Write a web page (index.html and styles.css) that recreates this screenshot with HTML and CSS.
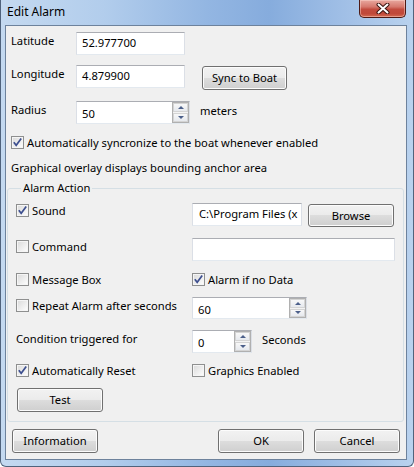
FILE: index.html
```html
<!DOCTYPE html>
<html>
<head>
<meta charset="utf-8">
<link rel="stylesheet" href="styles.css">
</head>
<body>
<div class="window">
  <div class="titlebar">
    <span class="title">Edit Alarm</span>
    <div class="close">
      <svg width="14" height="11" viewBox="0 0 14 11"><path d="M2.5 1.5 L11.5 9.5 M11.5 1.5 L2.5 9.5" stroke="#3a1410" stroke-width="4" stroke-linecap="round"/><path d="M2.5 1.5 L11.5 9.5 M11.5 1.5 L2.5 9.5" stroke="#ffffff" stroke-width="2" stroke-linecap="round"/></svg>
    </div>
  </div>
  <div class="client">
    <div class="row r-lat">
      <span class="lbl">Latitude</span>
      <div class="tb w109">52.977700</div>
    </div>
    <div class="row r-lon">
      <span class="lbl">Longitude</span>
      <div class="tb w109">4.879900</div>
      <div class="btn sync">Sync to Boat</div>
    </div>
    <div class="row r-rad">
      <span class="lbl">Radius</span>
      <div class="tb spin w114"><span class="val">50</span>
        <div class="spinbtns"><div class="sb up"></div><div class="sb down"></div></div>
      </div>
      <span class="unit meters">meters</span>
    </div>
    <div class="row r-auto">
      <span class="chk"><span class="cb on"><svg width="11" height="11" viewBox="0 0 11 11"><path d="M1.8 5.2 L4.2 8.3 L9.2 1.6" fill="none" stroke="#3d4f8f" stroke-width="1.7"/></svg></span>Automatically syncronize to the boat whenever enabled</span>
    </div>
    <div class="row r-note">Graphical overlay displays bounding anchor area</div>

    <div class="group">
      <div class="legend">Alarm Action</div>
      <div class="grow g-sound">
        <div class="lcell"><span class="chk"><span class="cb on"><svg width="11" height="11" viewBox="0 0 11 11"><path d="M1.8 5.2 L4.2 8.3 L9.2 1.6" fill="none" stroke="#3d4f8f" stroke-width="1.7"/></svg></span>Sound</span></div>
        <div class="tb w110 path"><span class="clip">C:\Program Files (x</span></div>
        <div class="btn browse">Browse</div>
      </div>
      <div class="grow g-cmd">
        <div class="lcell"><span class="chk"><span class="cb"></span>Command</span></div>
        <div class="tb w203"></div>
      </div>
      <div class="grow g-msg">
        <div class="lcell"><span class="chk"><span class="cb"></span>Message Box</span></div>
        <span class="chk"><span class="cb on"><svg width="11" height="11" viewBox="0 0 11 11"><path d="M1.8 5.2 L4.2 8.3 L9.2 1.6" fill="none" stroke="#3d4f8f" stroke-width="1.7"/></svg></span>Alarm if no Data</span>
      </div>
      <div class="grow g-rep">
        <div class="lcell"><span class="chk"><span class="cb"></span>Repeat Alarm after seconds</span></div>
        <div class="tb spin w115 h22"><span class="val">60</span>
          <div class="spinbtns"><div class="sb up"></div><div class="sb down"></div></div>
        </div>
      </div>
      <div class="grow g-cond">
        <div class="lcell"><span class="txt">Condition triggered for</span></div>
        <div class="tb spin w60"><span class="val">0</span>
          <div class="spinbtns"><div class="sb up"></div><div class="sb down"></div></div>
        </div>
        <span class="unit seconds">Seconds</span>
      </div>
      <div class="grow g-reset">
        <div class="lcell"><span class="chk"><span class="cb on"><svg width="11" height="11" viewBox="0 0 11 11"><path d="M1.8 5.2 L4.2 8.3 L9.2 1.6" fill="none" stroke="#3d4f8f" stroke-width="1.7"/></svg></span>Automatically Reset</span></div>
        <span class="chk"><span class="cb"></span>Graphics Enabled</span>
      </div>
      <div class="grow g-test">
        <div class="btn test">Test</div>
      </div>
    </div>

    <div class="bottom">
      <div class="btn">Information</div>
      <div class="spacer"></div>
      <div class="btn">OK</div>
      <div class="btn">Cancel</div>
    </div>
  </div>
</div>
</body>
</html>
```
FILE: styles.css
```css
* { box-sizing: border-box; }
html, body { margin: 0; padding: 0; }
body {
  width: 414px;
  height: 467px;
  overflow: hidden;
  font-family: "Noto Sans", "Open Sans", sans-serif;
  font-size: 11.2px;
  color: #000;
  background: #fff;
}
.window {
  width: 414px;
  height: 467px;
  background: linear-gradient(90deg, #c4d9f0 0%, #b2cdec 25%, #93b6e2 50%, #86acdd 65%, #a3c1e7 85%, #b9d2ee 100%);
  border-left: 1px solid #50637c;
  border-right: 1px solid #50637c;
  border-bottom: 1px solid #50637c;
  border-radius: 0 0 6px 6px;
  display: flex;
  flex-direction: column;
}
.titlebar {
  height: 25px;
  display: flex;
  align-items: flex-start;
  flex: none;
}
.title {
  margin: 4px 0 0 6px;
  line-height: 16px;
  font-size: 12px;
  color: #000;
}
.close {
  margin-left: auto;
  margin-right: 7px;
  width: 47px;
  height: 18px;
  border: 1px solid #4e1a15;
  border-top: none;
  border-radius: 0 0 5px 5px;
  background: linear-gradient(180deg, #e8a89f 0%, #d6786d 40%, #c24b3e 55%, #c0493a 80%, #d36a52 100%);
  box-shadow: inset 0 0 0 1px rgba(255,220,210,0.45);
  display: flex;
  align-items: center;
  justify-content: center;
}
.client {
  margin-left: 4px;
  width: 402px;
  height: 435px;
  border: 1px solid #6d829c;
  background: #f0f0f0;
  display: flex;
  flex-direction: column;
  flex: none;
}
.row {
  display: flex;
  align-items: flex-start;
  padding-left: 5px;
  flex: none;
}
.lbl {
  width: 65px;
  line-height: 16px;
  padding-top: 1px;
}
.r-lat { margin-top: 6px; height: 23px; }
.r-lon { margin-top: 10px; height: 25px; }
.r-rad { margin-top: 11px; height: 23px; }
.r-auto { margin-top: 11px; height: 15px; align-items: center; }
.r-note { margin-top: 10px; height: 16px; line-height: 16px; }

.tb {
  height: 23px;
  background: #fff;
  border: 1px solid #dbdfe6;
  border-top-color: #abadb3;
  border-bottom-color: #e3e9ef;
  padding-left: 5px;
  line-height: 20px;
  white-space: nowrap;
  overflow: hidden;
}
.w109 { width: 109px; }
.w110 { width: 110px; }
.w114 { width: 114px; }
.w115 { width: 115px; }
.w203 { width: 203px; }
.w60 { width: 60px; }
.h22 { height: 22px; }
.path { padding-left: 6px; padding-right: 1px; }
.clip { display: block; overflow: hidden; white-space: nowrap; }
.spin {
  display: flex;
  align-items: stretch;
  padding-right: 0;
}
.spin .val { flex: 1; line-height: 21px; padding-top: 1px; }
.spinbtns {
  width: 17px;
  border: 1px solid #b0b0b0;
  display: flex;
  flex-direction: column;
  justify-content: space-between;
  padding: 0;
  background: #f3f3f3;
}
.sb {
  flex: 1;
  border: 1px solid #d4d4d4;
  background: linear-gradient(180deg, #f8f8f8, #e6e9ee);
  display: flex;
  align-items: center;
  justify-content: center;
}
.sb + .sb { margin-top: 1px; }
.sb::after {
  content: "";
  width: 0;
  height: 0;
  border-left: 3px solid transparent;
  border-right: 3px solid transparent;
}
.up::after { border-bottom: 3px solid #4b5f8a; }
.down::after { border-top: 3px solid #4b5f8a; }

.unit { line-height: 16px; padding-top: 2px; }
.meters { margin-left: 10px; }
.seconds { margin-left: 10px; }

.btn {
  height: 24px;
  border: 1px solid #707070;
  border-radius: 3px;
  background: linear-gradient(180deg, #f2f2f2 0%, #ebebeb 50%, #dddddd 50%, #cfcfcf 100%);
  box-shadow: inset 0 0 0 1px #fcfcfc;
  display: flex;
  align-items: center;
  justify-content: center;
  line-height: 16px;
  width: 86px;
  flex: none;
}
.sync { margin-left: 17px; margin-top: 1px; width: 85px; }
.browse { margin-left: 6px; margin-top: 1px; height: 23px; }

.chk {
  display: inline-flex;
  align-items: center;
  height: 15px;
  line-height: 15px;
  white-space: nowrap;
}
.cb {
  width: 13px;
  height: 13px;
  border: 1px solid #8e8f8f;
  background: linear-gradient(135deg, #d9d9d9 0%, #f0f0f0 60%, #ffffff 100%);
  box-shadow: inset 0 0 0 1px #f5f5f5;
  margin-right: 3px;
  display: flex;
  align-items: center;
  justify-content: center;
  flex: none;
}
.cb svg { display: block; }

.group {
  margin-top: 12px;
  margin-left: 1px;
  width: 397px;
  border: 1px solid #d5dfe5;
  border-radius: 3px;
  padding: 0 0 9px 8px;
  flex: none;
}
.legend {
  margin: -9px 0 0 5px;
  padding: 0 2px;
  background: #f0f0f0;
  width: max-content;
  line-height: 16px;
  height: 16px;
}
.grow {
  display: flex;
  align-items: flex-start;
}
.lcell { width: 176px; flex: none; }
.txt { line-height: 16px; display: block; padding-top: 1px; }
.g-sound { margin-top: 7px; height: 24px; }
.g-cmd { margin-top: 11px; height: 23px; }
.g-cmd .lcell { padding-top: 1px; }
.g-msg { margin-top: 11px; height: 15px; }
.g-rep { margin-top: 10px; height: 22px; }
.g-rep .lcell { padding-top: 1px; }
.g-cond { margin-top: 11px; height: 23px; }
.g-reset { margin-top: 10px; height: 15px; }
.g-test { margin-top: 10px; height: 24px; }
.test { margin-left: 1px; }

.bottom {
  display: flex;
  margin-top: 7px;
  padding: 0 6px 0 6px;
  gap: 10px;
}
.spacer { flex: 1; }
```
